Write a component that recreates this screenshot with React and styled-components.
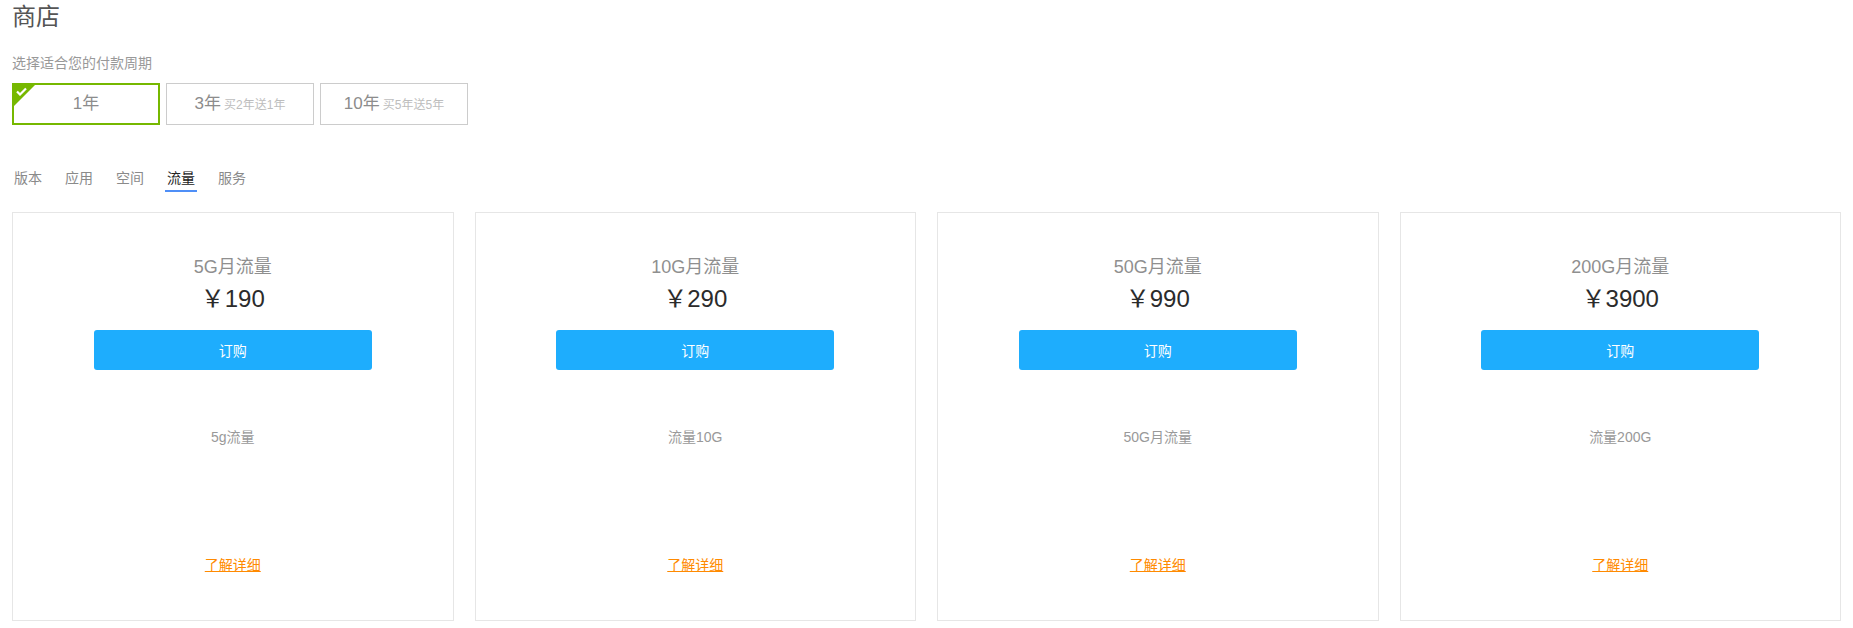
import React, { useState } from "react";
import styled, { createGlobalStyle } from "styled-components";

const GlobalStyle = createGlobalStyle`
  body {
    margin: 0;
    background: #fff;
    font-family: "Liberation Sans", Arial, "Noto Sans CJK SC", sans-serif;
  }
  * { box-sizing: border-box; }
`;

const Page = styled.div`
  padding: 0 12px;
`;

const Title = styled.h1`
  margin: 0;
  font-size: 24px;
  line-height: 34px;
  font-weight: normal;
  color: #555;
`;

const Subtitle = styled.div`
  margin-top: 19px;
  font-size: 14px;
  line-height: 20px;
  color: #999;
`;

const PeriodRow = styled.div`
  display: flex;
  gap: 6px;
  margin-top: 10px;
`;

const PeriodBox = styled.div`
  position: relative;
  width: 148px;
  height: 42px;
  display: flex;
  align-items: center;
  justify-content: center;
  gap: 3px;
  border: ${(p) => (p.$active ? "2px solid #76b800" : "1px solid #cccccc")};
  cursor: pointer;
  background: #fff;
`;

const Corner = styled.span`
  position: absolute;
  top: 0;
  left: 0;
  width: 0;
  height: 0;
  border-top: 21px solid #76b800;
  border-right: 21px solid transparent;
`;

const CheckIcon = styled.svg`
  position: absolute;
  top: 2px;
  left: 2px;
`;

const PeriodMain = styled.span`
  font-size: 17px;
  line-height: 22px;
  color: #8c8c8c;
`;

const PeriodNote = styled.span`
  font-size: 12px;
  line-height: 22px;
  color: #bdbdbd;
  padding-top: 2px;
`;

const Tabs = styled.div`
  display: flex;
  gap: 19px;
  margin-top: 43px;
`;

const Tab = styled.div`
  padding: 0 2px 2px;
  font-size: 14px;
  line-height: 20px;
  color: ${(p) => (p.$active ? "#222" : "#8a8a8a")};
  border-bottom: 2px solid ${(p) => (p.$active ? "#4f8ff7" : "transparent")};
  cursor: pointer;
`;

const CardGrid = styled.div`
  display: grid;
  grid-template-columns: repeat(4, 1fr);
  gap: 21px;
  margin-top: 20px;
`;

const Card = styled.div`
  border: 1px solid #e6e6e6;
  padding: 41px 0 45px;
  display: flex;
  flex-direction: column;
  align-items: center;
  text-align: center;
`;

const CardTitle = styled.div`
  font-size: 18px;
  line-height: 27px;
  color: #8f8f8f;
`;

const Price = styled.div`
  margin-top: 0;
  font-size: 24px;
  line-height: 36px;
  color: #2b2b2b;
`;

const BuyButton = styled.button`
  margin-top: 13px;
  width: 278px;
  height: 40px;
  border: none;
  border-radius: 3px;
  background: #1eadfd;
  color: #fff;
  font-family: inherit;
  font-size: 14px;
  cursor: pointer;
`;

const Desc = styled.div`
  margin-top: 57px;
  font-size: 14px;
  line-height: 20px;
  color: #999;
`;

const MoreLink = styled.a`
  margin-top: 108px;
  font-size: 14px;
  line-height: 20px;
  color: #ff8a00;
  text-decoration: underline;
  cursor: pointer;
`;

const periods = [
  { main: "1年", note: "" },
  { main: "3年", note: "买2年送1年" },
  { main: "10年", note: "买5年送5年" },
];

const tabs = ["版本", "应用", "空间", "流量", "服务"];

const products = [
  { title: "5G月流量", price: "190", desc: "5g流量" },
  { title: "10G月流量", price: "290", desc: "流量10G" },
  { title: "50G月流量", price: "990", desc: "50G月流量" },
  { title: "200G月流量", price: "3900", desc: "流量200G" },
];

export default function App() {
  const [period, setPeriod] = useState(0);
  const [tab, setTab] = useState(3);
  return (
    <Page>
      <GlobalStyle />
      <Title>商店</Title>
      <Subtitle>选择适合您的付款周期</Subtitle>
      <PeriodRow>
        {periods.map((p, i) => (
          <PeriodBox key={p.main} $active={period === i} onClick={() => setPeriod(i)}>
            {period === i && (
              <>
                <Corner />
                <CheckIcon width="11" height="9" viewBox="0 0 11 9">
                  <path d="M1 4.5 L4 7.5 L10 1.5" fill="none" stroke="#fff" strokeWidth="2.2" />
                </CheckIcon>
              </>
            )}
            <PeriodMain>{p.main}</PeriodMain>
            {p.note && <PeriodNote>{p.note}</PeriodNote>}
          </PeriodBox>
        ))}
      </PeriodRow>
      <Tabs>
        {tabs.map((t, i) => (
          <Tab key={t} $active={tab === i} onClick={() => setTab(i)}>
            {t}
          </Tab>
        ))}
      </Tabs>
      <CardGrid>
        {products.map((p) => (
          <Card key={p.title}>
            <CardTitle>{p.title}</CardTitle>
            <Price>￥{p.price}</Price>
            <BuyButton>订购</BuyButton>
            <Desc>{p.desc}</Desc>
            <MoreLink>了解详细</MoreLink>
          </Card>
        ))}
      </CardGrid>
    </Page>
  );
}
